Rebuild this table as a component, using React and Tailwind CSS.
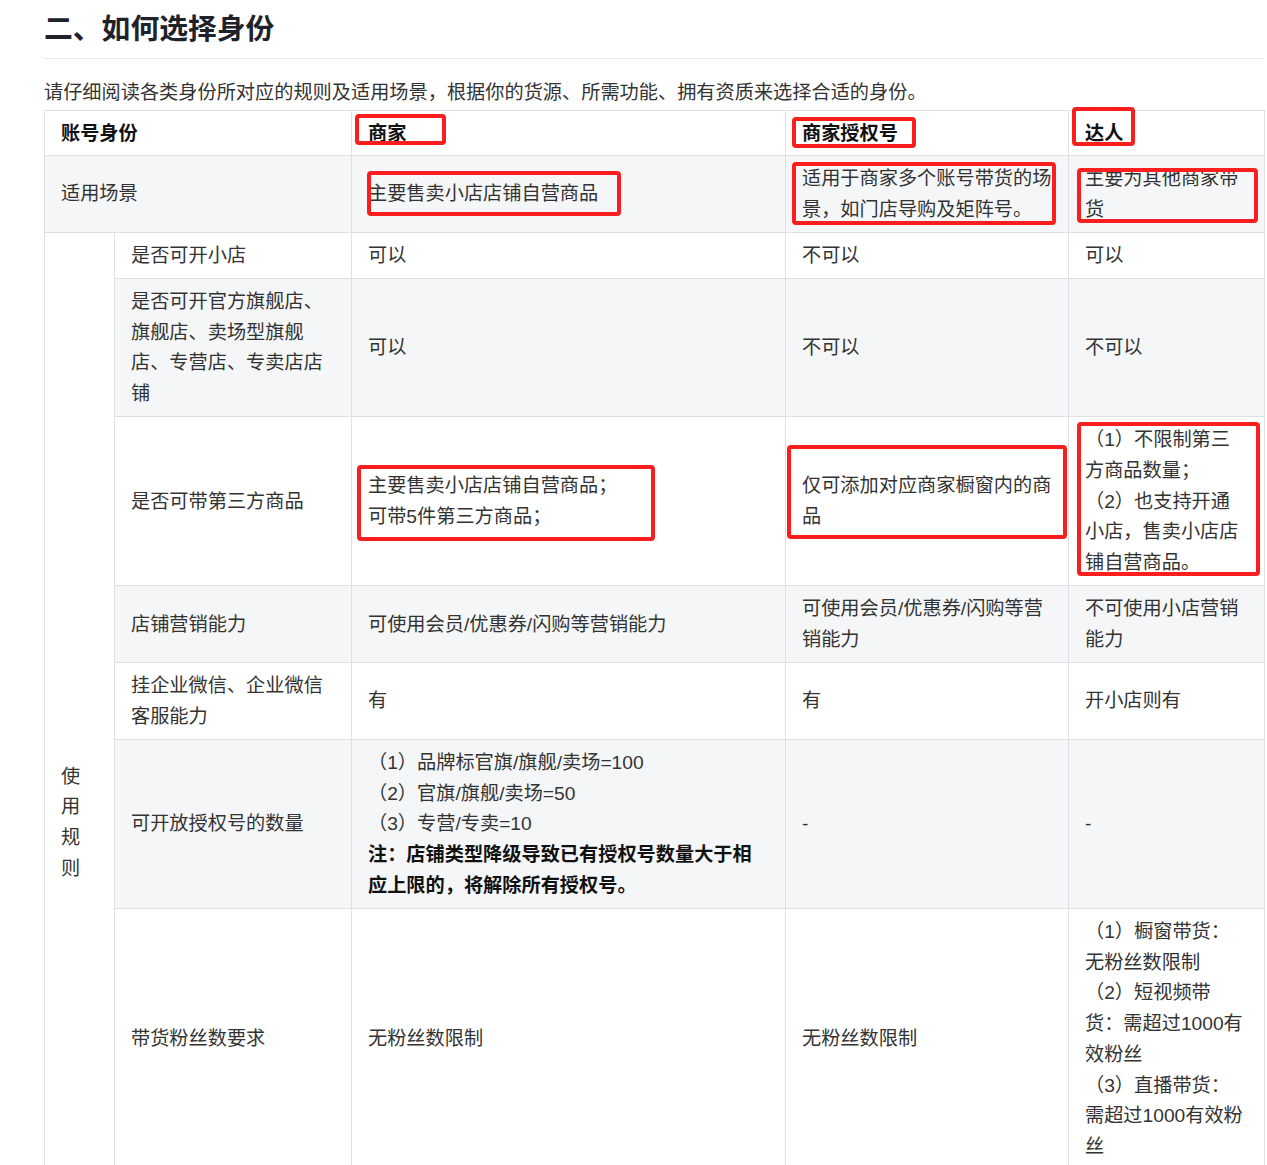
import React from 'react';

const font = { fontFamily: '"Liberation Sans", "Noto Sans CJK SC", sans-serif' };

const cell = 'border border-[#dee0e3] px-4 pt-[8.4px] pb-[6px] align-middle text-left';

// annotation boxes drawn over the table (page coordinates)
const marks = [
  { l: 355, t: 114, r: 446, b: 145 },
  { l: 792, t: 117, r: 916, b: 148 },
  { l: 1072, t: 107, r: 1135, b: 146 },
  { l: 367, t: 171, r: 621, b: 216 },
  { l: 792, t: 162, r: 1056, b: 225 },
  { l: 1077, t: 168, r: 1258, b: 223 },
  { l: 357, t: 465, r: 655, b: 541 },
  { l: 787, t: 445, r: 1067, b: 539 },
  { l: 1077, t: 422, r: 1260, b: 576 },
];

function Row({ gray, label, a, b, c }) {
  const bg = gray ? 'bg-[#f5f6f7]' : 'bg-white';
  return (
    <tr className={bg}>
      <td className={cell}>{label}</td>
      <td className={cell}>{a}</td>
      <td className={cell}>{b}</td>
      <td className={cell}>{c}</td>
    </tr>
  );
}

export default function App() {
  return (
    <div className="relative min-h-screen bg-white text-[#333] pt-[8px]" style={font}>
      <div className="pl-[44px] pr-[3px]">
        <h2 className="pb-[8px] border-b border-[#e8e9eb] text-[28.8px] leading-[42px] font-bold text-[#1f2329]">
          二、如何选择身份
        </h2>
        <p className="mt-[19px] mb-[2px] text-[19.2px] leading-[30px] whitespace-nowrap">
          请仔细阅读各类身份所对应的规则及适用场景，根据你的货源、所需功能、拥有资质来选择合适的身份。
        </p>

        <table className="table-fixed border-collapse w-[1220px] text-[19.2px] leading-[30.72px]">
          <colgroup>
            <col className="w-[70px]" />
            <col className="w-[237px]" />
            <col className="w-[434px]" />
            <col className="w-[283px]" />
            <col className="w-[196px]" />
          </colgroup>
          <tbody>
            <tr className="bg-white font-bold text-[#111]">
              <td className={`${cell} !pt-[7.5px] !pb-[5.5px]`} colSpan={2}>账号身份</td>
              <td className={`${cell} !pt-[7.5px] !pb-[5.5px]`}>商家</td>
              <td className={`${cell} !pt-[7.5px] !pb-[5.5px]`}>商家授权号</td>
              <td className={`${cell} !pt-[7.5px] !pb-[5.5px]`}>达人</td>
            </tr>
            <tr className="bg-[#f5f6f7]">
              <td className={cell} colSpan={2}>适用场景</td>
              <td className={cell}>主要售卖小店店铺自营商品</td>
              <td className={cell}>适用于商家多个账号带货的场景，如门店导购及矩阵号。</td>
              <td className={cell}>主要为其他商家带货</td>
            </tr>
            <tr className="bg-white">
              <td className={`${cell} !align-top !pt-[529px] bg-white`} rowSpan={8}>
                <div>使</div>
                <div>用</div>
                <div>规</div>
                <div>则</div>
              </td>
              <td className={cell}>是否可开小店</td>
              <td className={cell}>可以</td>
              <td className={cell}>不可以</td>
              <td className={cell}>可以</td>
            </tr>
            <Row
              gray
              label="是否可开官方旗舰店、旗舰店、卖场型旗舰店、专营店、专卖店店铺"
              a="可以"
              b="不可以"
              c="不可以"
            />
            <Row
              label="是否可带第三方商品"
              a={<>主要售卖小店店铺自营商品；<br />可带5件第三方商品；</>}
              b="仅可添加对应商家橱窗内的商品"
              c={
                <>
                  <div>（1）不限制第三方商品数量；</div>
                  <div>（2）也支持开通小店，售卖小店店铺自营商品。</div>
                </>
              }
            />
            <Row
              gray
              label="店铺营销能力"
              a="可使用会员/优惠券/闪购等营销能力"
              b="可使用会员/优惠券/闪购等营销能力"
              c="不可使用小店营销能力"
            />
            <Row label="挂企业微信、企业微信客服能力" a="有" b="有" c="开小店则有" />
            <Row
              gray
              label="可开放授权号的数量"
              a={
                <>
                  <div>（1）品牌标官旗/旗舰/卖场=100</div>
                  <div>（2）官旗/旗舰/卖场=50</div>
                  <div>（3）专营/专卖=10</div>
                  <div className="font-bold text-[#111]">注：店铺类型降级导致已有授权号数量大于相应上限的，将解除所有授权号。</div>
                </>
              }
              b="-"
              c="-"
            />
            <Row
              label="带货粉丝数要求"
              a="无粉丝数限制"
              b="无粉丝数限制"
              c={
                <>
                  <div>（1）橱窗带货：无粉丝数限制</div>
                  <div>（2）短视频带货：需超过1000有效粉丝</div>
                  <div>（3）直播带货：需超过1000有效粉丝</div>
                </>
              }
            />
          </tbody>
        </table>
      </div>

      {marks.map((m, i) => (
        <div
          key={i}
          className="absolute border-4 border-[#fa1e1e] rounded-[4px] pointer-events-none"
          style={{ left: m.l, top: m.t, width: m.r - m.l, height: m.b - m.t }}
        />
      ))}
    </div>
  );
}
